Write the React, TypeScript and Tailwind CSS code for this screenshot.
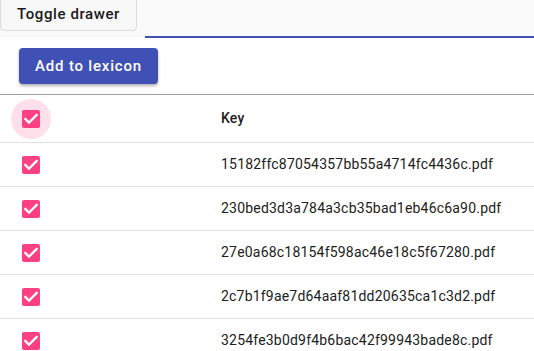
import React from "react";

const keys = [
  "15182ffc87054357bb55a4714fc4436c.pdf",
  "230bed3d3a784a3cb35bad1eb46c6a90.pdf",
  "27e0a68c18154f598ac46e18c5f67280.pdf",
  "2c7b1f9ae7d64aaf81dd20635ca1c3d2.pdf",
  "3254fe3b0d9f4b6bac42f99943bade8c.pdf",
];

function Check() {
  return (
    <svg width="24" height="24" viewBox="0 0 24 24" className="block">
      <path
        fill="#ff4081"
        d="M19 3H5c-1.11 0-2 .9-2 2v14c0 1.1.89 2 2 2h14c1.11 0 2-.9 2-2V5c0-1.1-.89-2-2-2zm-9 14l-5-5 1.41-1.41L10 14.17l7.59-7.59L19 8l-9 9z"
      />
      <path fill="#ffffff" d="M10 17l-5-5 1.41-1.41L10 14.17l7.59-7.59L19 8l-9 9z" />
    </svg>
  );
}

export default function App() {
  return (
    <div
      className="w-[534px] h-[351px] overflow-hidden bg-white text-[rgba(0,0,0,0.87)]"
      style={{ fontFamily: "Roboto, 'Liberation Sans', sans-serif" }}
    >
      <div className="h-[38px] bg-[#fafafa] flex">
        <button className="-mt-[4px] h-[35px] w-[137px] pt-[1px] border border-[#dcdcdc] rounded-b-[4px] bg-[#f8f8f8] text-[15px] font-medium tracking-[0.6px] text-[#1a1a1a]">
          Toggle drawer
        </button>
        <div className="ml-[8px] flex-1 self-end h-[2px] bg-[#3f51b5]" />
      </div>
      <div className="pt-[10px] pl-[19px] pb-[10px]">
        <button className="h-[36px] w-[139px] rounded-[4px] bg-[#3f51b5] text-white text-[15px] font-medium tracking-[0.8px] shadow-[0_2px_3px_rgba(0,0,0,0.3)]">
          Add to lexicon
        </button>
      </div>
      <div className="border-t border-[#a0a0a0]">
        <div className="h-[48px] flex items-center border-b border-[#e0e0e0]">
          <div className="w-[221px] pl-[11px] flex items-center">
            <div className="w-[40px] h-[40px] rounded-full bg-[#ffe0ea] flex items-center justify-center">
              <Check />
            </div>
          </div>
          <div className="text-[14px] font-medium tracking-[0.2px] text-[#212121]">Key</div>
        </div>
        {keys.map((k) => (
          <div key={k} className="h-[44px] flex items-center border-b border-[#e0e0e0]">
            <div className="w-[221px] pl-[19px] flex items-center">
              <Check />
            </div>
            <div className="text-[14px] tracking-[0.2px] text-[#212121]">{k}</div>
          </div>
        ))}
      </div>
    </div>
  );
}
